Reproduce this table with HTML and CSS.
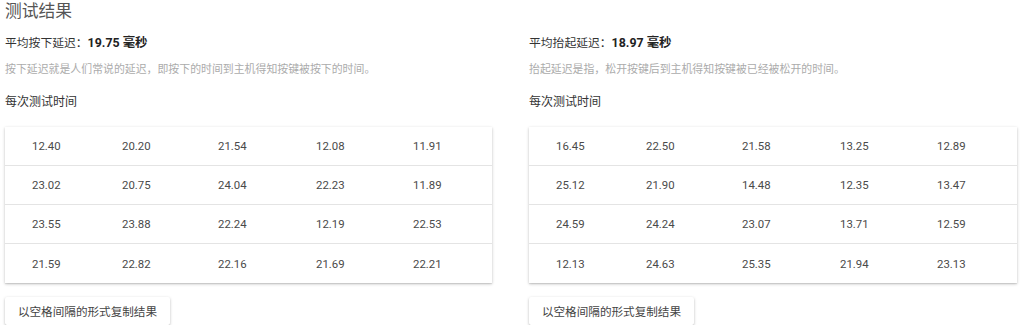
FILE: index.html
```html
<!DOCTYPE html>
<html lang="zh-CN">
<head>
<meta charset="utf-8">
<link rel="stylesheet" href="styles.css">
</head>
<body>
<div class="page">
  <h2 class="title">测试结果</h2>
  <div class="columns">
    <section class="col">
      <div class="avg">平均按下延迟：<b>19.75 毫秒</b></div>
      <p class="desc">按下延迟就是人们常说的延迟，即按下的时间到主机得知按键被按下的时间。</p>
      <div class="sub">每次测试时间</div>
      <div class="table">
        <div class="row"><span>12.40</span><span>20.20</span><span>21.54</span><span>12.08</span><span>11.91</span></div>
        <div class="row"><span>23.02</span><span>20.75</span><span>24.04</span><span>22.23</span><span>11.89</span></div>
        <div class="row"><span>23.55</span><span>23.88</span><span>22.24</span><span>12.19</span><span>22.53</span></div>
        <div class="row"><span>21.59</span><span>22.82</span><span>22.16</span><span>21.69</span><span>22.21</span></div>
      </div>
      <button class="btn">以空格间隔的形式复制结果</button>
    </section>
    <section class="col">
      <div class="avg">平均抬起延迟：<b>18.97 毫秒</b></div>
      <p class="desc">抬起延迟是指，松开按键后到主机得知按键被已经被松开的时间。</p>
      <div class="sub">每次测试时间</div>
      <div class="table">
        <div class="row"><span>16.45</span><span>22.50</span><span>21.58</span><span>13.25</span><span>12.89</span></div>
        <div class="row"><span>25.12</span><span>21.90</span><span>14.48</span><span>12.35</span><span>13.47</span></div>
        <div class="row"><span>24.59</span><span>24.24</span><span>23.07</span><span>13.71</span><span>12.59</span></div>
        <div class="row"><span>12.13</span><span>24.63</span><span>25.35</span><span>21.94</span><span>23.13</span></div>
      </div>
      <button class="btn">以空格间隔的形式复制结果</button>
    </section>
  </div>
</div>
</body>
</html>
```
FILE: styles.css
```css
html, body {
  margin: 0;
  padding: 0;
  background: #ffffff;
}
body {
  font-family: "Noto Sans CJK SC", "Noto Sans", sans-serif;
  color: #333;
}
.page {
  padding-left: 5px;
}
.title {
  margin: 0;
  font-size: 16.8px;
  line-height: 20px;
  font-weight: 400;
  color: #555;
}
.columns {
  display: grid;
  grid-template-columns: 487px 488px;
  column-gap: 37px;
  margin-top: 13px;
}
.col {
  display: flex;
  flex-direction: column;
  align-items: flex-start;
}
.avg {
  font-size: 11.8px;
  line-height: 18px;
  color: #333;
}
.avg b {
  font-family: Roboto, "Noto Sans CJK SC", sans-serif;
  font-size: 12.4px;
  font-weight: 700;
  color: #222;
}
.desc {
  margin: 8px 0 0;
  font-size: 10.9px;
  line-height: 16px;
  color: #ababab;
}
.sub {
  margin-top: 16px;
  font-size: 12px;
  line-height: 18px;
  color: #333;
}
.table {
  margin-top: 17px;
  width: 100%;
  background: #fff;
  box-shadow: 0 1px 3px rgba(0,0,0,0.22), 0 1px 1px rgba(0,0,0,0.08);
}
.row {
  display: grid;
  grid-template-columns: 90px 96px 98px 97px 1fr;
  height: 39px;
  box-sizing: border-box;
  align-items: center;
  border-bottom: 1px solid #e4e4e4;
}
.row:last-child {
  border-bottom: none;
}
.row span {
  padding-left: 27px;
  font-family: Roboto, sans-serif;
  font-size: 11.4px;
  color: #4a4a4a;
}
.btn {
  margin-top: 14px;
  width: 165px;
  height: 28px;
  padding: 0;
  border: none;
  background: #fff;
  font-family: "Noto Sans CJK SC", sans-serif;
  font-size: 11.6px;
  color: #444;
  box-shadow: 0 1px 3px rgba(0,0,0,0.25), 0 1px 1px rgba(0,0,0,0.08);
  border-radius: 2px;
}
```
